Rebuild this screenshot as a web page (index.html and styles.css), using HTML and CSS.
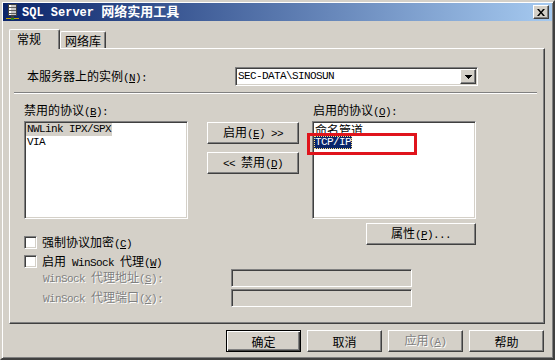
FILE: index.html
```html
<!DOCTYPE html>
<html lang="zh-CN">
<head>
    <meta charset="UTF-8">
    <title>SQL Server 网络实用工具</title>
    <link rel="stylesheet" href="styles.css">
</head>
<body>

    <div class="window">
        <div class="titlebar">
            <svg class="app-icon" viewBox="0 0 16 16" width="16" height="16">
                <rect x="3.5" y="0.5" width="8" height="11" fill="#c8c8c8" stroke="#404040"/>
                <rect x="4" y="1" width="2" height="10" fill="#ffffff"/>
                <path d="M4 3.5h7M4 6.5h7M4 9.5h7" stroke="#606060"/>
                <rect x="6" y="12" width="3" height="2" fill="#404040"/>
                <rect x="1" y="14" width="13" height="1" fill="#c0a000"/>
                <rect x="6" y="14" width="3" height="2" fill="#208020"/>
            </svg>
            <span class="title"><span class="en">SQL Server </span>网络实用工具</span>
            <div class="close-btn">
                <svg viewBox="0 0 8 7" width="8" height="7">
                    <path d="M0 0h2l2 2.5 2-2.5h2l-3 3.5 3 3.5h-2l-2-2.5-2 2.5h-2l3-3.5z" fill="#000"/>
                </svg>
            </div>
        </div>

        <div class="tabs">
            <div class="tab active">常规</div>
            <div class="tab">网络库</div>
        </div>

        <div class="panel">
            <div class="instance-row">
                <span class="instance-label">本服务器上的实例<span class="en">(<u>N</u>):</span></span>
                <div class="combo">
                    <span class="en">SEC-DATA\SINOSUN</span>
                    <div class="combo-arrow">
                        <svg viewBox="0 0 7 4" width="7" height="4">
                            <path d="M0 0h7v1h-1v1h-1v1h-1v1h-1v-1h-1v-1h-1v-1h-1z" fill="#000"/>
                        </svg>
                    </div>
                </div>
            </div>

            <div class="sep"></div>

            <div class="proto">
                <span class="col-label">禁用的协议<span class="en">(<u>B</u>):</span></span>
                <span class="col-label right-label">启用的协议<span class="en">(<u>O</u>):</span></span>

                <div class="listbox left-list">
                    <span class="item idle-sel en">NWLink IPX/SPX</span>
                    <span class="item en">VIA</span>
                </div>

                <div class="move-btns">
                    <div class="btn"><span>启用<span class="en">(<u>E</u>) &gt;&gt;</span></span></div>
                    <div class="btn"><span><span class="en">&lt;&lt; </span>禁用<span class="en">(<u>D</u>)</span></span></div>
                </div>

                <div class="listbox right-list">
                    <span class="item">命名管道</span>
                    <span class="item sel en">TCP/IP</span>
                    <div class="mark"></div>
                </div>

                <div class="check-row first-check">
                    <div class="check"></div>
                    <span>强制协议加密<span class="en">(<u>C</u>)</span></span>
                </div>
                <div class="btn props-btn"><span>属性<span class="en">(<u>P</u>)...</span></span></div>
            </div>

            <div class="check-row second-check">
                <div class="check"></div>
                <span>启用<span class="en"> WinSock </span>代理<span class="en">(<u>W</u>)</span></span>
            </div>

            <div class="proxy-row first-proxy">
                <span class="proxy-label disabled"><span class="en">WinSock </span>代理地址<span class="en">(<u>S</u>):</span></span>
                <div class="field"></div>
            </div>
            <div class="proxy-row">
                <span class="proxy-label disabled"><span class="en">WinSock </span>代理端口<span class="en">(<u>X</u>):</span></span>
                <div class="field"></div>
            </div>
        </div>

        <div class="dialog-buttons">
            <div class="btn wide default">确定</div>
            <div class="btn wide">取消</div>
            <div class="btn wide disabled"><span>应用<span class="en">(<u>A</u>)</span></span></div>
            <div class="btn wide">帮助</div>
        </div>
    </div>

</body>
</html>
```

FILE: styles.css
```css
/* --- base --- */
* {
    box-sizing: border-box;
}

body {
    margin: 0;
    background: #d4d0c8;
    color: #000;
    font-family: "Noto Sans CJK SC", sans-serif;
    font-size: 12px;
    line-height: 13px;
}

.en {
    font-family: "Liberation Mono", "Noto Sans CJK SC", monospace;
    font-size: 11px;
    letter-spacing: -0.6px;
    white-space: pre;
}

u {
    text-underline-offset: 1px;
}

.disabled {
    color: #808080;
    text-shadow: 1px 1px 0 #fff;
}

/* --- 3D borders (classic look) --- */
.btn,
.close-btn,
.combo-arrow {
    background: #d4d0c8;
    border: 1px solid;
    border-color: #fff #404040 #404040 #fff;
    box-shadow: inset -1px -1px #808080;
}

.listbox,
.combo,
.check,
.field {
    background: #fff;
    border: 1px solid;
    border-color: #808080 #fff #fff #808080;
    box-shadow: inset 1px 1px #404040, inset -1px -1px #d4d0c8;
}

/* --- window frame --- */
.window {
    width: 555px;
    height: 360px;
    border: 2px solid;
    border-color: #d4d0c8 #404040 #404040 #d4d0c8;
    box-shadow: inset 1px 1px #fff, inset -1px -1px #808080;
    padding: 1px;
}

.titlebar {
    height: 18px;
    display: flex;
    align-items: center;
    padding: 0 3px 0 2px;
    background: linear-gradient(to right, #0a246a, #a6caf0);
    color: #fff;
}

.app-icon {
    flex: none;
}

.title {
    margin-left: 1px;
    font-weight: bold;
    font-size: 13px;
}

.title .en {
    font-size: 12px;
    letter-spacing: 0;
}

.close-btn {
    margin-left: auto;
    width: 16px;
    height: 14px;
    display: flex;
    align-items: center;
    justify-content: center;
}

/* --- tabs --- */
.tabs {
    display: flex;
    align-items: flex-end;
    height: 19px;
    margin: 8px 0 0 6px;
    position: relative;
    z-index: 1;
}

.tab {
    height: 17px;
    width: 46px;
    padding: 2px 0 0 4px;
    background: #d4d0c8;
    border: 1px solid;
    border-bottom: none;
    border-color: #fff #404040 #404040 #fff;
    border-radius: 2px 2px 0 0;
    box-shadow: inset -1px 0 #808080;
}

.tab.active {
    width: 51px;
    height: 20px;
    margin-bottom: -1px;
    padding-left: 7px;
}

.panel {
    width: 536px;
    height: 276px;
    margin-left: 6px;
    border: 1px solid;
    border-color: #fff #404040 #404040 #fff;
    box-shadow: inset -1px -1px #808080;
}

/* --- instance row --- */
.instance-row {
    display: flex;
    align-items: center;
    height: 19px;
    margin: 18px 0 0 17px;
}

.instance-label {
    width: 208px;
}

.combo {
    width: 243px;
    height: 19px;
    padding: 1px;
    display: flex;
    align-items: center;
}

.combo > .en {
    padding-left: 1px;
}

.combo-arrow {
    margin-left: auto;
    width: 16px;
    height: 15px;
    display: flex;
    align-items: center;
    justify-content: center;
}

.sep {
    width: 523px;
    margin: 6px 0 0 4px;
    border-top: 1px solid #808080;
    border-bottom: 1px solid #fff;
}

/* --- protocol lists --- */
.proto {
    display: grid;
    grid-template-columns: 183px 105px 164px;
    grid-template-rows: 18px 98px 30px;
    margin: 9px 0 0 14px;
}

.right-label {
    grid-column: 3;
    padding-left: 1px;
}

.listbox {
    width: 164px;
    height: 98px;
    padding: 1px 0 0 1px;
}

.right-list {
    grid-column: 3;
    position: relative;
}

.item {
    display: table;
    height: 13px;
    padding: 0 1px;
}

.item.idle-sel {
    background: #d4d0c8;
}

.item.sel {
    background: #0a246a;
    color: #fff;
    outline: 1px dotted #ffe080;
    outline-offset: -1px;
}

/* red marker drawn over the list */
.mark {
    position: absolute;
    left: -6px;
    top: 11px;
    width: 110px;
    height: 22px;
    border: 3px solid #e0141c;
}

.move-btns {
    display: flex;
    flex-direction: column;
    gap: 8px;
    width: 92px;
    padding-top: 1px;
}

.btn {
    height: 22px;
    display: flex;
    align-items: center;
    justify-content: center;
}

.props-btn {
    grid-column: 3;
    justify-self: end;
    align-self: start;
    width: 110px;
    margin-top: 4px;
}

/* --- checkboxes & proxy --- */
.check-row {
    display: flex;
    align-items: center;
    gap: 5px;
    height: 13px;
}

.check {
    width: 13px;
    height: 13px;
}

.first-check {
    grid-column: 1 / 3;
    align-self: end;
}

.second-check {
    margin: 6px 0 0 14px;
}

.proxy-row {
    display: flex;
    align-items: center;
    height: 18px;
    margin: 2px 0 0 33px;
}

.first-proxy {
    margin-top: 1px;
}

.proxy-label {
    width: 188px;
}

.field {
    width: 181px;
    height: 18px;
    background: #d4d0c8;
}

/* --- dialog buttons --- */
.dialog-buttons {
    display: flex;
    justify-content: flex-end;
    gap: 6px;
    margin-top: 6px;
    padding-right: 8px;
}

.btn.wide {
    width: 75px;
}

.btn.default {
    border-color: #000;
    box-shadow: inset 1px 1px #fff, inset -1px -1px #404040, inset -2px -2px #808080;
}
```
